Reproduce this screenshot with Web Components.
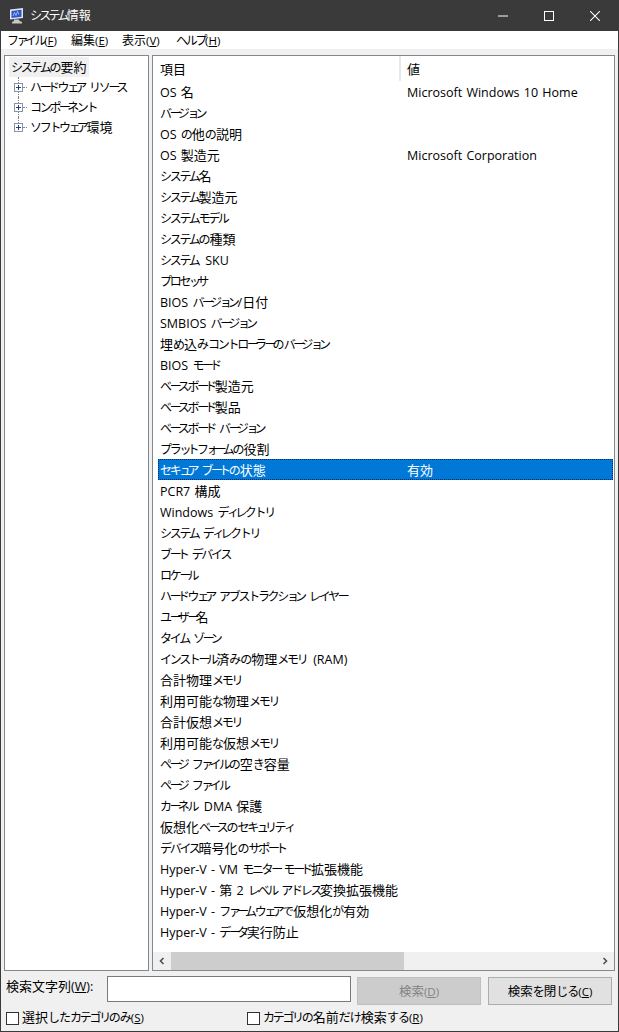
<!DOCTYPE html>
<html lang="ja">
<head>
<meta charset="utf-8">
<title>システム情報</title>
<style>
  html, body { margin: 0; height: 100%; }
  body { font: 12.5px "Open Sans", "Noto Sans CJK JP", sans-serif; color: #000; }
</style>
</head>
<body>
<msinfo-window>
  <title-bar slot="title"></title-bar>
  <menu-bar slot="menu"></menu-bar>
  <category-tree slot="tree"></category-tree>
  <info-list slot="list"></info-list>
  <search-bar slot="search"></search-bar>
</msinfo-window>

<script>
const ROWS = [
  ['OS 名', 'Microsoft Windows 10 Home'], ['バージョン'], ['OS の他の説明'],
  ['OS 製造元', 'Microsoft Corporation'], ['システム名'], ['システム製造元'],
  ['システムモデル'], ['システムの種類'], ['システム SKU'], ['プロセッサ'],
  ['BIOS バージョン/日付'], ['SMBIOS バージョン'], ['埋め込みコントローラーのバージョン'],
  ['BIOS モード'], ['ベースボード製造元'], ['ベースボード製品'], ['ベースボード バージョン'],
  ['プラットフォームの役割'], ['セキュア ブートの状態', '有効'], ['PCR7 構成'],
  ['Windows ディレクトリ'], ['システム ディレクトリ'], ['ブート デバイス'], ['ロケール'],
  ['ハードウェア アブストラクション レイヤー'], ['ユーザー名'], ['タイム ゾーン'],
  ['インストール済みの物理メモリ (RAM)'], ['合計物理メモリ'], ['利用可能な物理メモリ'],
  ['合計仮想メモリ'], ['利用可能な仮想メモリ'], ['ページ ファイルの空き容量'], ['ページ ファイル'],
  ['カーネル DMA 保護'], ['仮想化ベースのセキュリティ'], ['デバイス暗号化のサポート'],
  ['Hyper-V - VM モニター モード拡張機能'], ['Hyper-V - 第 2 レベル アドレス変換拡張機能'],
  ['Hyper-V - ファームウェアで仮想化が有効'], ['Hyper-V - データ実行防止']
];

// the reference font has narrow kana, so kana, hiragana and kanji get their own runs
const RUNS = `
  .k, .h, .j { line-height: 0; }
  .k { font-size: 12px; letter-spacing: -2.3px; }
  .s { letter-spacing: -4px; }
  .sp { margin-right: 2.5px; }
  .h { font-size: 12px; letter-spacing: -1px; }
  .j { font-size: 13px; }
`;
function jp(s) {
  return s
    .replace(/[ァ-ヶー・]+(?= [A-Za-z(0-9])/g, m => `<span class="k sp">${m}</span>`)
    .replace(/(^|[^ァ-ヶー・])([ァ-ヶー・]+)(?!<\/span>)(?![ァ-ヶー・])/g, (m, a, b) => `${a}<span class="k">${b}</span>`)
    .replace(/[ァィゥェォッャュョー]/g, m => `<span class="s">${m}</span>`)
    .replace(/[ぁ-ん]+/g, m => `<span class="h">${m}</span>`)
    .replace(/[一-龠]+/g, m => `<span class="j">${m}</span>`);
}

class MsinfoWindow extends HTMLElement {
  constructor() {
    super();
    this.attachShadow({ mode: 'open' });
    this.shadowRoot.innerHTML = `
      <style>
        :host { display: flex; flex-direction: column; box-sizing: border-box; height: 1032px; width: 619px;
                background: #f0f0f0; border: 1px solid #3a3a3a; border-top: 0; overflow: hidden; word-spacing: 1px; }
        .panes { display: flex; gap: 3px; height: 916px; margin: 6px 3px 0 3px; }
      </style>
      <slot name="title"></slot>
      <slot name="menu"></slot>
      <div class="panes"><slot name="tree"></slot><slot name="list"></slot></div>
      <slot name="search"></slot>`;
  }
}

class TitleBar extends HTMLElement {
  constructor() {
    super();
    this.attachShadow({ mode: 'open' });
    this.shadowRoot.innerHTML = `
      <style>
        ${RUNS}
        .j { font-size: 12px; }
        .k { letter-spacing: -2.7px; }
        :host { display: flex; align-items: center; height: 31px; background: #3a3a3a; color: #fff; flex: none; }
        .icon { margin: 0 5px 0 8px; }
        .name { flex: 1; line-height: 33px; }
        .btn { width: 46px; height: 31px; display: flex; align-items: center; justify-content: center; }
      </style>
      <svg class="icon" width="16" height="16" viewBox="0 0 16 16">
        <path d="M1 1.5L14 0v10L1 11.5z" fill="#dfe6f2"/><path d="M2.5 3l10-1.2v7L2.5 10z" fill="#2f55c4"/>
        <path d="M4 8l1.5-3.5 1.5 3 1.5-4 1.5 3" fill="none" stroke="#9fc4ff" stroke-width=".9"/>
        <path d="M5 11.5h5l.5 1.5 2.5 1v1.5H3V14l2-1z" fill="#c6c8cc"/>
      </svg>
      <span class="name">${jp('システム情報')}</span>
      <span class="btn"><svg width="10" height="10" viewBox="0 0 10 10"><path d="M0 5h10" stroke="#fff"/></svg></span>
      <span class="btn"><svg width="10" height="10" viewBox="0 0 10 10"><rect x=".5" y=".5" width="9" height="9" fill="none" stroke="#fff"/></svg></span>
      <span class="btn"><svg width="10" height="10" viewBox="0 0 10 10"><path d="M0 0l10 10M10 0L0 10" stroke="#fff" stroke-width="1.05"/></svg></span>`;
  }
}

class MenuBar extends HTMLElement {
  constructor() {
    super();
    this.attachShadow({ mode: 'open' });
    const items = [['ファイル', 'F', 64], ['編集', 'E', 51], ['表示', 'V', 54], ['ヘルプ', 'H', 50]];
    this.shadowRoot.innerHTML = `
      <style>
        ${RUNS}
        .j { font-size: 12px; }
        :host { display: flex; height: 18px; flex: none; background: #fff; padding-left: 6px; line-height: 20px; }
        span.m { display: block; font-size: 11.5px; white-space: nowrap; }
      </style>
      ${items.map(([t, k, w]) => `<span class="m" style="width:${w}px">${jp(t)}(<u>${k}</u>)</span>`).join('')}`;
  }
}

class CategoryTree extends HTMLElement {
  constructor() {
    super();
    this.attachShadow({ mode: 'open' });
    const kids = ['ハードウェア リソース', 'コンポーネント', 'ソフトウェア環境'];
    this.shadowRoot.innerHTML = `
      <style>
        ${RUNS}
        :host { display: block; box-sizing: border-box; width: 145px; height: 100%; flex: none; background: #fff;
                border: 1px solid #828790; padding: 1px 0 0 4px; }
        .root { display: inline-block; height: 20px; line-height: 22px; background: #f0f0f0; padding: 0 3px 0 2px; vertical-align: top; }
        .kid { display: flex; align-items: center; height: 20px; position: relative; white-space: nowrap; }
        .kid .t { line-height: 22px; height: 20px; }
        .kid::before { content: ""; position: absolute; left: 9px; top: 0; height: 20px; border-left: 1px dotted #808080; }
        .kid:last-child::before { height: 10px; }
        .box { box-sizing: border-box; width: 9px; height: 9px; border: 1px solid #8a93a3; margin-left: 5px; flex: none; position: relative; background:
               linear-gradient(#1f3f8a,#1f3f8a) center/5px 1px no-repeat, linear-gradient(#1f3f8a,#1f3f8a) center/1px 5px no-repeat, #fff; }
        .dash { width: 4px; margin-right: 3px; border-top: 1px dotted #808080; flex: none; }
      </style>
      <div class="root">${jp('システムの要約')}</div>
      ${kids.map(k => `<div class="kid"><span class="box"></span><span class="dash"></span><span class="t">${jp(k)}</span></div>`).join('')}`;
  }
}

class InfoList extends HTMLElement {
  constructor() {
    super();
    this.attachShadow({ mode: 'open' });
    this.shadowRoot.innerHTML = `
      <style>
        ${RUNS}
        :host { display: flex; flex-direction: column; box-sizing: border-box; flex: 1; min-width: 0; height: 100%; background: #fff;
                border: 1px solid #828790; }
        .head { display: flex; height: 25px; flex: none; margin-bottom: 0; }
        .head span.t { box-sizing: border-box; height: 25px; line-height: 27px; }
        .head .c1 { width: 248px; flex: none; padding-left: 7px; border-right: 2px solid #e8e8e8; box-sizing: border-box; }
        .head .c2 { flex: 1; padding-left: 6px; }
        .body { flex: 1; min-height: 0; overflow: hidden; }
        .row { display: flex; height: 21px; line-height: 23px; margin: 0 1px 0 5px; white-space: nowrap; }
        .row .c1 { width: 243px; height: 21px; flex: none; box-sizing: border-box; padding-left: 2px; }
        .row .c2 { flex: 1; height: 21px; padding-left: 6px; }
        .row.sel { background: #0078d7; color: #fff; outline: 1px dotted #0a2a60; outline-offset: -1px; }
        .bar { display: flex; height: 18px; flex: none; background: #f0f0f0; align-items: center; }
        .arrow { width: 18px; height: 18px; display: flex; align-items: center; justify-content: center; flex: none; }
        .track { flex: 1; height: 18px; }
        .thumb { width: 233px; height: 18px; background: #cdcdcd; }
      </style>
      <div class="head"><span class="t c1">${jp('項目')}</span><span class="t c2">${jp('値')}</span></div>
      <div class="body">
        ${ROWS.map(([a, b]) => `<div class="row${b === '有効' ? ' sel' : ''}"><span class="c1">${jp(a)}</span><span class="c2">${jp(b || '')}</span></div>`).join('')}
      </div>
      <div class="bar">
        <span class="arrow"><svg width="8" height="8" viewBox="0 0 8 8"><path d="M5.5 1L2.5 4l3 3" fill="none" stroke="#505050" stroke-width="1.6"/></svg></span>
        <span class="track"><div class="thumb"></div></span>
        <span class="arrow"><svg width="8" height="8" viewBox="0 0 8 8"><path d="M2.5 1l3 3-3 3" fill="none" stroke="#505050" stroke-width="1.6"/></svg></span>
      </div>`;
  }
}

class SearchBar extends HTMLElement {
  constructor() {
    super();
    this.attachShadow({ mode: 'open' });
    this.shadowRoot.innerHTML = `
      <style>
        ${RUNS}
        :host { display: block; flex: 1; padding: 5px 6px 0 5px; font-size: 11.5px; }
        .top { display: flex; align-items: flex-start; height: 29px; }
        .label { width: 101px; flex: none; line-height: 22px; font-size: 12.5px; }
        .input { box-sizing: border-box; width: 244px; height: 26px; background: #fff; border: 1px solid #7a7a7a; flex: none; }
        .b { box-sizing: border-box; height: 28px; width: 124px; margin: 1px 0 0 6px; flex: none; text-align: center; line-height: 28px; border: 1px solid #adadad; background: #e1e1e1; }
        .b .j { font-size: 12.5px; }
        .b.off { background: #cccccc; border-color: #bfbfbf; color: #838383; }
        .b.last { margin-left: 7px; }
        .checks { display: flex; align-items: center; height: 17px; margin-top: 5px; }
        .cb { box-sizing: border-box; width: 13px; height: 13px; background: #fff; border: 1px solid #333; flex: none; margin-right: 3px; }
        .c { display: flex; align-items: center; white-space: nowrap; }
        .c.one { width: 241px; }
        .c > span:last-child { line-height: 15px; margin-top: -2px; }
      </style>
      <div class="top">
        <span class="label">${jp('検索文字列')}(<u>W</u>):</span>
        <span class="input"></span>
        <span class="b off">${jp('検索')}(<u>D</u>)</span>
        <span class="b last">${jp('検索を閉じる')}(<u>C</u>)</span>
      </div>
      <div class="checks">
        <span class="c one"><span class="cb"></span><span>${jp('選択したカテゴリのみ')}(<u>S</u>)</span></span>
        <span class="c"><span class="cb"></span><span>${jp('カテゴリの名前だけ検索する')}(<u>R</u>)</span></span>
      </div>`;
  }
}

customElements.define('msinfo-window', MsinfoWindow);
customElements.define('title-bar', TitleBar);
customElements.define('menu-bar', MenuBar);
customElements.define('category-tree', CategoryTree);
customElements.define('info-list', InfoList);
customElements.define('search-bar', SearchBar);
</script>
</body>
</html>
